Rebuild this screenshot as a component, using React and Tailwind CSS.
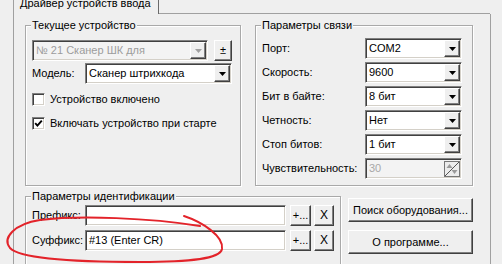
import React from "react";

const sunken =
  "border border-t-[#808080] border-l-[#808080] border-b-white border-r-white shadow-[inset_1px_1px_0_#404040,inset_-1px_-1px_0_#d4d0c8]";
const raised =
  "border border-t-white border-l-white border-b-[#404040] border-r-[#404040] shadow-[inset_-1px_-1px_0_#808080] bg-[#efefef]";

function Arrow({ disabled }) {
  return (
    <svg width="7" height="4" viewBox="0 0 7 4">
      <polygon points="0,0 7,0 3.5,4" fill={disabled ? "#a0a0a0" : "#000"} />
    </svg>
  );
}

function Combo({ value, width, disabled }) {
  return (
    <div
      className={`flex h-[21px] ${width} ${sunken} ${
        disabled ? "bg-[#f3f3f3] text-[#9c9c9c]" : "bg-white text-black"
      }`}
    >
      <span className="flex-1 pl-[3px] leading-[19px] whitespace-nowrap overflow-hidden">{value}</span>
      <div className={`w-[16px] h-[17px] m-[1px] flex items-center justify-center ${raised}`}>
        <Arrow disabled={disabled} />
      </div>
    </div>
  );
}

function Spin({ value, width }) {
  return (
    <div className={`flex h-[21px] ${width} ${sunken} bg-[#f3f3f3] text-[#a8a8a8]`}>
      <span className="flex-1 pl-[3px] leading-[19px]">{value}</span>
      <div className="w-[16px] h-[16px] mt-[2px] mr-[1px] flex">
        <svg width="16" height="16" viewBox="0 0 16 16">
          <rect x="0.5" y="0.5" width="15" height="15" fill="#ececec" stroke="#777" />
          <line x1="1" y1="15" x2="15" y2="1" stroke="#555" />
          <polygon points="2.5,7 5.5,3 8.5,7" fill="#9a9a9a" />
          <polygon points="7.5,9 13.5,9 10.5,13" fill="#9a9a9a" />
        </svg>
      </div>
    </div>
  );
}

function Button({ children, className }) {
  return (
    <div className={`flex items-center justify-center whitespace-nowrap ${raised} ${className}`}>
      {children}
    </div>
  );
}

function Check({ checked, label }) {
  return (
    <div className="flex items-center gap-[5px] h-[13px]">
      <div className={`w-[13px] h-[13px] bg-white flex items-center justify-center ${sunken}`}>
        {checked && (
          <svg width="9" height="9" viewBox="0 0 9 9">
            <polyline points="1.2,4.2 3.4,6.6 7.8,1.6" fill="none" stroke="#000" strokeWidth="1.9" />
          </svg>
        )}
      </div>
      <span className="whitespace-nowrap">{label}</span>
    </div>
  );
}

function Group({ title, className, children }) {
  return (
    <div
      className={`relative border border-[#a9a9a9] shadow-[inset_1px_1px_0_#fff,1px_1px_0_#fff] ${className}`}
    >
      <span className="absolute -top-[7px] left-[5px] px-px bg-[#efefef] whitespace-nowrap">{title}</span>
      {children}
    </div>
  );
}

function Row({ label, children }) {
  return (
    <div className="flex items-center h-[21px]">
      <span className="w-[103px] whitespace-nowrap">{label}</span>
      {children}
    </div>
  );
}

export default function App() {
  return (
    <div className="relative w-[502px] h-[264px] overflow-hidden bg-[#efefef] text-[11px] leading-[13px] text-black font-['Liberation_Sans',Arial,sans-serif]">
      <div className="flex h-[14px]">
        <div className="w-[13px]" />
        <div className="w-[146px] border-l border-l-[#a0a0a0] border-r border-r-[#6a6a6a] pl-[6px]">
          <div className="-mt-[3px] whitespace-nowrap">Драйвер устройств ввода</div>
        </div>
        <div className="w-[331px] border-b border-[#a0a0a0]" />
      </div>

      <div className="ml-[13px] w-[478px] h-[250px] border-l border-r border-[#a0a0a0] pl-[11px] pt-[11px]">
        <div className="flex gap-[14px]">
          <Group title="Текущее устройство" className="w-[216px] h-[161px] pt-[14px] pl-[6px]">
            <div className="flex gap-[6px]">
              <Combo value="№ 21 Сканер ШК для" width="w-[176px]" disabled />
              <Button className="w-[18px] h-[21px]">±</Button>
            </div>
            <div className="flex items-center mt-[2px]">
              <span className="w-[53px]">Модель:</span>
              <Combo value="Сканер штрихкода" width="w-[147px]" />
            </div>
            <div className="mt-[9px]">
              <Check label="Устройство включено" />
            </div>
            <div className="mt-[11px]">
              <Check checked label="Включать устройство при старте" />
            </div>
          </Group>

          <Group title="Параметры связи" className="w-[218px] h-[161px] pt-[12px] pl-[6px]">
            <div className="flex flex-col gap-[3px]">
              <Row label="Порт:">
                <Combo value="COM2" width="w-[97px]" />
              </Row>
              <Row label="Скорость:">
                <Combo value="9600" width="w-[97px]" />
              </Row>
              <Row label="Бит в байте:">
                <Combo value="8 бит" width="w-[97px]" />
              </Row>
              <Row label="Четность:">
                <Combo value="Нет" width="w-[97px]" />
              </Row>
              <Row label="Стоп битов:">
                <Combo value="1 бит" width="w-[97px]" />
              </Row>
              <Row label="Чувствительность:">
                <Spin value="30" width="w-[97px]" />
              </Row>
            </div>
          </Group>
        </div>

        <div className="flex gap-[7px] mt-[10px]">
          <Group title="Параметры идентификации" className="w-[316px] h-[80px] pt-[8px] pl-[6px]">
            <div className="flex flex-col gap-[4px]">
              <div className="flex items-center h-[21px]">
                <span className="w-[53px]">Префикс:</span>
                <div className={`w-[201px] h-[21px] bg-white ${sunken}`} />
                <Button className="w-[21px] h-[21px] ml-[4px]">+...</Button>
                <Button className="w-[20px] h-[21px] ml-[3px] text-[12px]">X</Button>
              </div>
              <div className="flex items-center h-[21px]">
                <span className="w-[53px]">Суффикс:</span>
                <div className={`w-[201px] h-[21px] bg-white pl-[3px] leading-[19px] ${sunken}`}>
                  #13 (Enter CR)
                </div>
                <Button className="w-[21px] h-[21px] ml-[4px]">+...</Button>
                <Button className="w-[20px] h-[21px] ml-[3px] text-[12px]">X</Button>
              </div>
            </div>
          </Group>
          <div className="flex flex-col gap-[8px] pt-[2px]">
            <Button className="w-[125px] h-[24px]">Поиск оборудования...</Button>
            <Button className="w-[125px] h-[24px]">О программе...</Button>
          </div>
        </div>
      </div>

      <svg
        className="absolute inset-0 pointer-events-none"
        width="502"
        height="264"
        viewBox="0 0 502 264"
      >
        <path
          d="M184 216 C202 222 224 236 222 249 C220 259 190 262 140 262 C80 262 20 259 10 248 C2 238 14 224 40 220 C80 215 150 218 200 226"
          fill="none"
          stroke="#e3232a"
          strokeWidth="2"
          strokeLinecap="round"
        />
      </svg>
    </div>
  );
}
